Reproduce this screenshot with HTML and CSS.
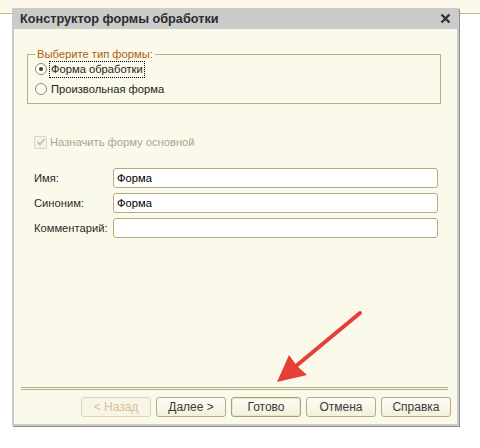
FILE: index.html
```html
<!DOCTYPE html>
<html lang="ru">
<head>
<meta charset="utf-8">
<title>Конструктор формы обработки</title>
<link rel="stylesheet" href="styles.css">
</head>
<body>
<div class="dialog">
  <div class="titlebar">
    <span class="title">Конструктор формы обработки</span>
    <svg class="close" width="11" height="11" viewBox="0 0 11 11"><path d="M1.5 1.5L9.5 9.5M9.5 1.5L1.5 9.5" stroke="#333" stroke-width="2.4"/></svg>
  </div>
  <div class="body">
    <fieldset class="group">
      <legend>Выберите тип формы:</legend>
      <div class="radio-row"><span class="radio checked"></span><span class="rlabel focused">Форма обработки</span></div>
      <div class="radio-row"><span class="radio"></span><span class="rlabel">Произвольная форма</span></div>
    </fieldset>
    <div class="check-row">
      <span class="checkbox"><svg width="10" height="10" viewBox="0 0 10 10"><path d="M1.5 5L4 7.5L8.5 2" fill="none" stroke="#c4c0ad" stroke-width="1.8"/></svg></span>
      <span class="check-label">Назначить форму основной</span>
    </div>
    <div class="fields">
      <label class="flabel">Имя:</label><div class="input">Форма</div>
      <label class="flabel">Синоним:</label><div class="input">Форма</div>
      <label class="flabel">Комментарий:</label><div class="input"></div>
    </div>
    <div class="spacer"></div>
    <div class="separator"></div>
    <div class="buttons">
      <button class="btn" disabled>&lt; Назад</button>
      <button class="btn">Далее &gt;</button>
      <button class="btn default">Готово</button>
      <button class="btn">Отмена</button>
      <button class="btn">Справка</button>
    </div>
  </div>
</div>
<svg class="arrow" width="480" height="448" viewBox="0 0 480 448">
  <line x1="360" y1="313" x2="296" y2="366" stroke="#e53f36" stroke-width="4" stroke-linecap="round"/>
  <polygon points="289,355 297,366 307,375 277,382" fill="#e53f36"/>
</svg>
</body>
</html>
```
FILE: styles.css
```css
html, body {
  margin: 0;
  padding: 0;
}
body {
  width: 480px;
  height: 448px;
  position: relative;
  overflow: hidden;
  font-family: "Liberation Sans", Arial, sans-serif;
  font-size: 11.2px;
  color: #222;
  background: linear-gradient(to bottom, #fcf9ea 0, #fcf9ea 13px, #c3b78e 13px, #c3b78e 14px, #ffffff 14px);
  padding-top: 8px;
  box-sizing: border-box;
}
.dialog {
  margin-left: 12px;
  width: 447px;
  height: 418px;
  box-sizing: border-box;
  border: 2px solid #c9c9c9;
  border-top: 0;
  box-shadow: 1px 1px 0 #8e8e8e;
  background: #fbf9ea;
  display: flex;
  flex-direction: column;
}
.titlebar {
  height: 21px;
  margin: 0 -2px;
  background: #cbcbcb;
  display: flex;
  align-items: center;
  justify-content: space-between;
  padding: 0 8px 0 8px;
  flex: none;
}
.title {
  font-weight: bold;
  font-size: 12.7px;
  color: #2b2b2b;
}
.close {
  display: block;
}
.body {
  flex: 1;
  display: flex;
  flex-direction: column;
}
.group {
  margin: 18px 16px 0 13px;
  padding: 0 0 4px 7px;
  border: 1px solid #b9ae85;
  min-width: 0;
}
.group legend {
  padding: 0 2px;
  margin-bottom: -3px;
  color: #a8620e;
  line-height: 15px;
}
.radio-row {
  height: 20px;
  display: flex;
  align-items: center;
}
.radio {
  width: 10px;
  height: 10px;
  border: 1px solid #8d8a7c;
  border-radius: 50%;
  background: #fefdf7;
  position: relative;
  flex: none;
}
.radio.checked::after {
  content: "";
  position: absolute;
  left: 3px;
  top: 3px;
  width: 4px;
  height: 4px;
  border-radius: 50%;
  background: #3d3d3d;
}
.rlabel {
  margin-left: 2px;
  padding: 1px 1px;
  border: 1px dotted transparent;
  line-height: 13px;
}
.rlabel.focused {
  border-color: #000;
}
.check-row {
  margin: 30px 0 0 20px;
  height: 16px;
  display: flex;
  align-items: center;
}
.checkbox {
  width: 11px;
  height: 11px;
  border: 1px solid #d8d4c2;
  border-radius: 2px;
  background: #f6f4e8;
  display: flex;
  align-items: center;
  justify-content: center;
}
.check-label {
  margin-left: 3px;
  color: #a9a592;
}
.fields {
  margin: 18px 19px 0 20px;
  display: grid;
  grid-template-columns: 79px 1fr;
  row-gap: 5px;
  align-items: center;
}
.flabel {
  color: #2b2b2b;
}
.input {
  height: 18px;
  border: 1px solid #b6aa80;
  border-radius: 3px;
  background: #fff;
  padding: 0 3px;
  line-height: 18px;
  color: #000;
}
.spacer {
  flex: 1;
}
.separator {
  margin: 0 9px 0 7px;
  height: 1px;
  border-top: 1px solid #b9ae85;
  border-bottom: 1px solid #b9ae85;
}
.buttons {
  margin: 7px 6px 7px 0;
  display: flex;
  justify-content: flex-end;
  gap: 5px;
}
.btn {
  width: 70px;
  height: 20px;
  padding: 0;
  font-family: "Liberation Sans", Arial, sans-serif;
  font-size: 12px;
  color: #3a3a3a;
  border: 1px solid #b2aa8c;
  border-radius: 3px;
  background: linear-gradient(to bottom, #fdfcf4 0%, #f4f0dc 100%);
}
.btn:disabled {
  color: #d9bf9a;
  border-color: #ddd6bd;
  background: #f8f5e6;
}
.btn.default {
  border-color: #a99f7c;
  box-shadow: inset 0 0 0 1px #ece4c4;
}
.arrow {
  position: absolute;
  left: 0;
  top: 0;
  pointer-events: none;
}
```
